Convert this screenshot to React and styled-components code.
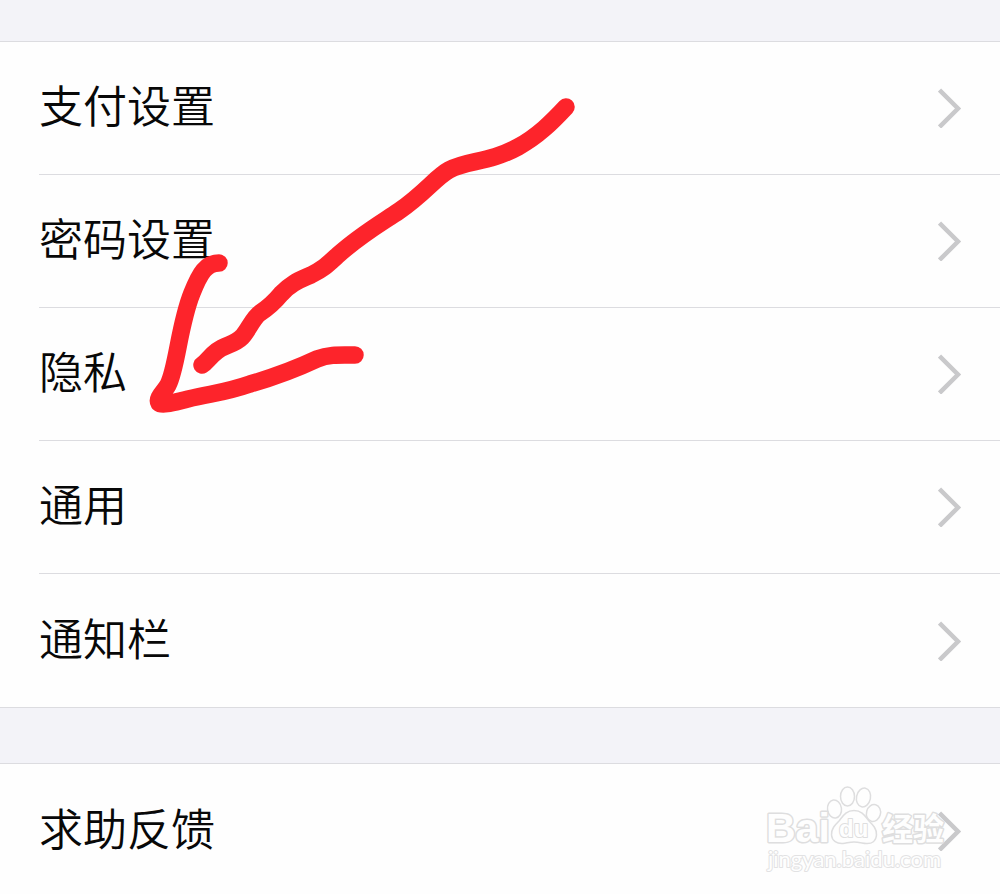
import React from "react";
import styled, { createGlobalStyle } from "styled-components";

const GlobalStyle = createGlobalStyle`
  * { box-sizing: border-box; }
  body {
    margin: 0;
    background: #f3f3f8;
    font-family: "Noto Sans CJK SC", sans-serif;
  }
`;

const Page = styled.main`
  position: relative;
  display: flex;
  flex-direction: column;
  gap: 55px;
  height: 100vh;
  padding-top: 41px;
  overflow-x: hidden;
  overflow-y: auto;
  scrollbar-width: none;
`;

const Group = styled.nav`
  position: relative;
  flex: none;
  background: #fefefe;
  border-top: 1px solid #dcdce0;
  border-bottom: 1px solid #dcdce0;
`;

const List = styled.ul`
  list-style: none;
  margin: 0;
  padding: 0 0 0 39px;
`;

const Item = styled.li`
  &:not(:last-child) > a {
    border-bottom: 1px solid #dcdce0;
  }
`;

const RowLink = styled.a`
  display: flex;
  align-items: center;
  justify-content: space-between;
  height: 133px;
  padding-right: 38px;
  color: #080808;
  text-decoration: none;
`;

const Label = styled.span`
  padding-bottom: 8px;
  font-size: 44px;
  font-weight: 350;
  line-height: 64px;
`;

const Chevron = styled.svg`
  flex: none;
  width: 24px;
  height: 40px;
`;

const Annotation = styled.svg`
  position: absolute;
  left: 140px;
  top: 90px;
  width: 450px;
  height: 330px;
  pointer-events: none;
`;

const Watermark = styled.svg`
  position: absolute;
  right: 50px;
  top: 16px;
  width: 190px;
  height: 94px;
  pointer-events: none;
`;

function Row({ label }) {
  return (
    <Item>
      <RowLink href="#">
        <Label>{label}</Label>
        <Chevron viewBox="0 0 24 40" aria-hidden="true">
          <path d="M1.500 2L20 20.500L1.500 39" fill="none" stroke="#c9c9cb" strokeWidth="4.500" />
        </Chevron>
      </RowLink>
    </Item>
  );
}

function RedArrow() {
  return (
    <Annotation viewBox="140 90 450 330" aria-hidden="true">
      <g fill="none" stroke="#fd242b" strokeWidth="17.500" strokeLinecap="round" strokeLinejoin="round">
        <path d="M566 107C552 122 538 136 518 147C489 163 467 160 449 170C436 177 425 193 399 211C378 225 359 236 338 255C326 266 323 269 311 275C300 280 291 283 281 294C272 305 266 309 260 313C253 318 249 329 242 337C234 345 226 344 217 351C209 357 207 362 202 365" />
        <path d="M219 263C206 263 200 273 192 293C179 325 177 368 168 385C165 391 156 398 159 403C162 406 175 402 188 399C213 393 224 393 250 384C281 375 300 367 317 359C330 354 340 355 355 355" />
      </g>
    </Annotation>
  );
}

function BaiduMark() {
  return (
    <Watermark viewBox="760 780 190 94" role="img" aria-label="Baidu 经验">
      <g fill="#fefefe" stroke="#dededf" strokeWidth="1.500" strokeLinejoin="round">
        <ellipse cx="834.500" cy="809" rx="7" ry="9" transform="rotate(-8 834.500 809)" />
        <ellipse cx="847.500" cy="796.500" rx="7" ry="9.500" />
        <ellipse cx="863.500" cy="797.500" rx="7" ry="9.500" transform="rotate(12 863.500 797.500)" />
        <ellipse cx="873.500" cy="813" rx="7" ry="8.500" transform="rotate(15 873.500 813)" />
        <path d="M854 810.500C846 810.500 843 816 839 821C835 825 831 829 831.500 835C832 841 837 844 843 843.500C847 843 850 842 854 842C858 842 862 843 866 843.500C872 844 876 841 876.500 835C877 829 873 825 869 821C865 816 862 810.500 854 810.500Z" />
      </g>
      <g fill="#fefefe" stroke="#dededf" strokeWidth="2" strokeLinejoin="round" paintOrder="stroke">
        <text x="766" y="842" fontFamily="Liberation Sans, sans-serif" fontWeight="700" fontSize="41" strokeWidth="3">Bai</text>
        <text x="839" y="837" fontFamily="Liberation Sans, sans-serif" fontWeight="700" fontSize="24">du</text>
        <text x="882" y="840" fontFamily="Noto Sans CJK SC, sans-serif" fontWeight="700" fontSize="31" strokeWidth="3">经验</text>
        <text x="768" y="867" fontFamily="Lato, sans-serif" fontSize="22" stroke="#e2e2e3">jingyan.baidu.com</text>
      </g>
    </Watermark>
  );
}

export default function App() {
  return (
    <>
      <GlobalStyle />
      <Page>
        <Group aria-label="设置">
          <List>
            {["支付设置", "密码设置", "隐私", "通用", "通知栏"].map((label) => (
              <Row key={label} label={label} />
            ))}
          </List>
        </Group>
        <Group aria-label="反馈">
          <BaiduMark />
          <List>
            <Row label="求助反馈" />
          </List>
        </Group>
        <RedArrow />
      </Page>
    </>
  );
}
